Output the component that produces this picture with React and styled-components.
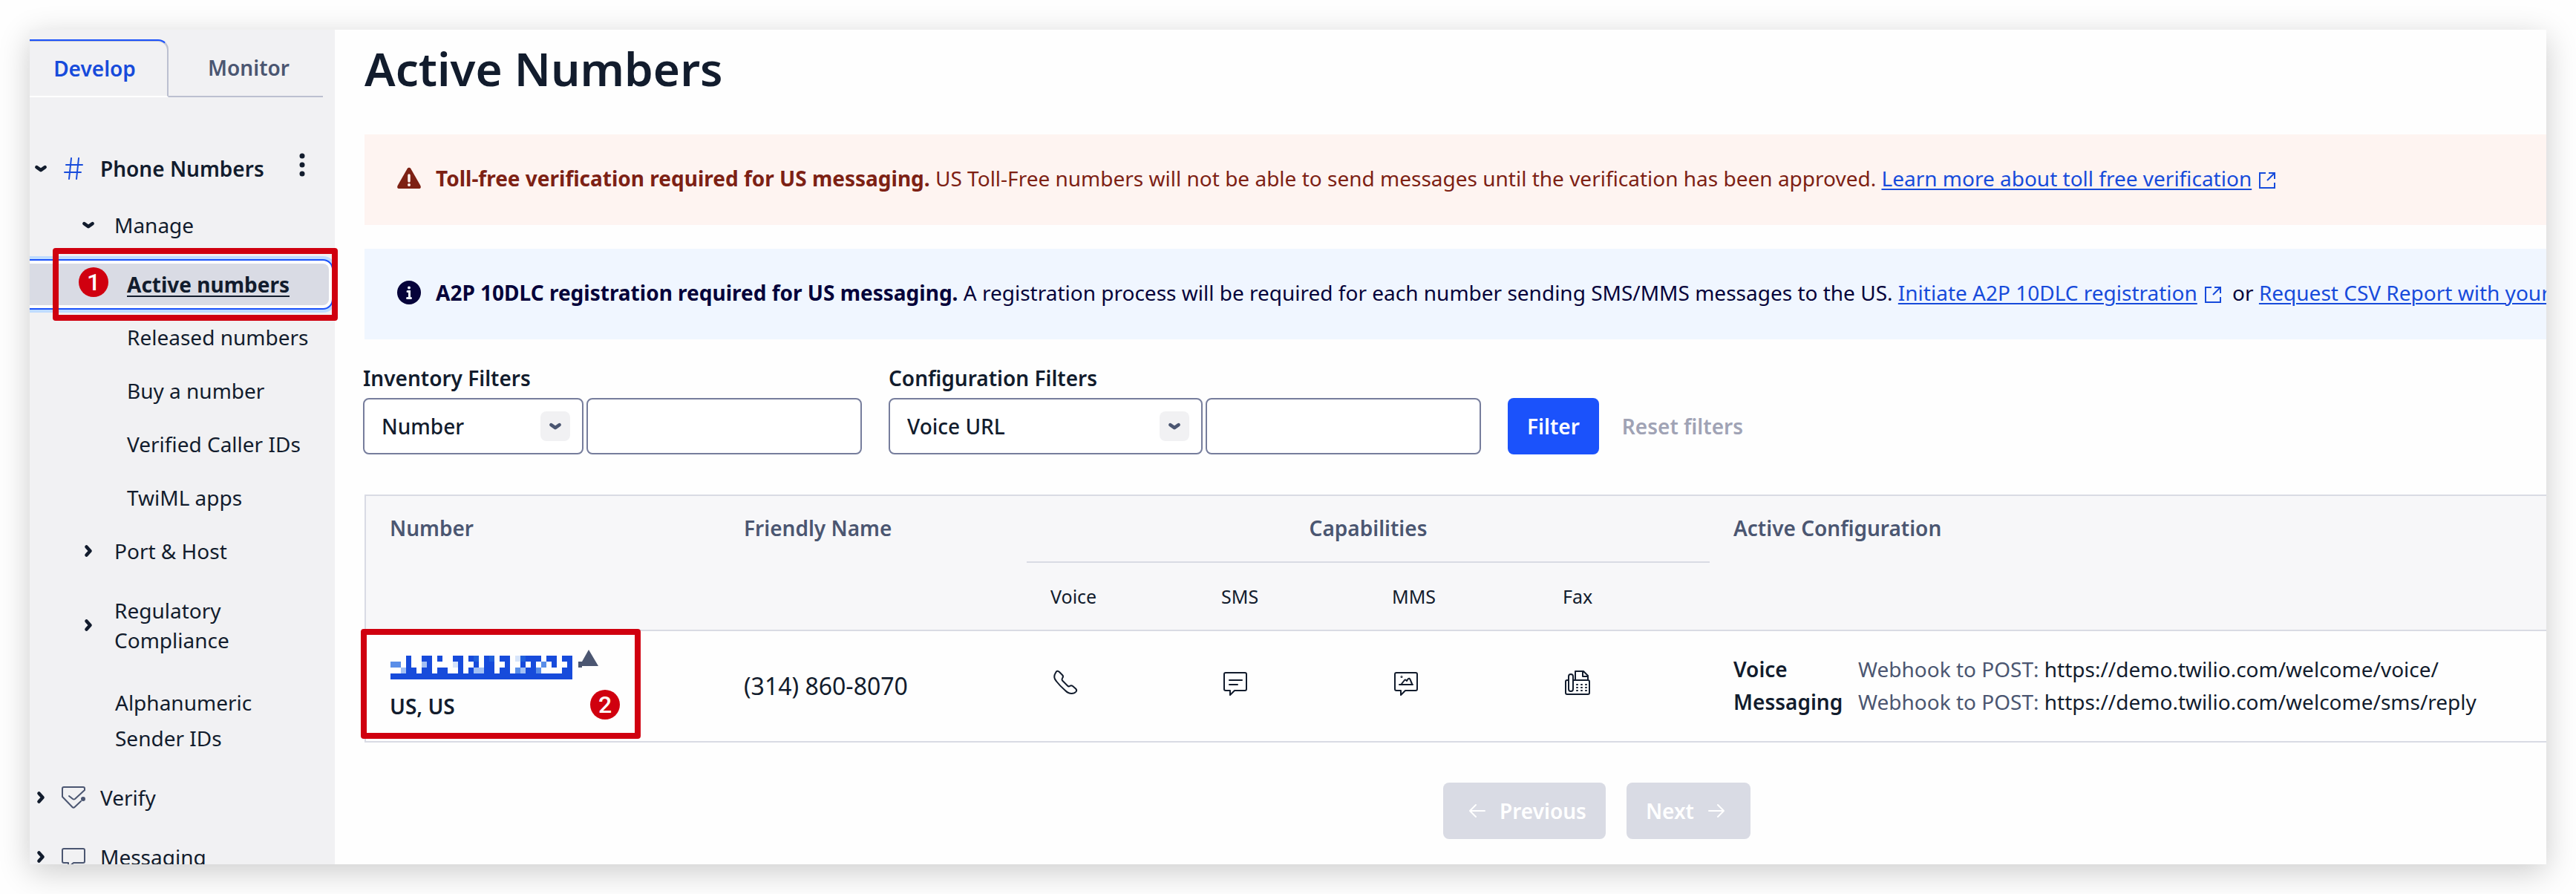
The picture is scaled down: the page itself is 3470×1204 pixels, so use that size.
import React from 'react';
import styled, { createGlobalStyle, css } from 'styled-components';

const GlobalStyle = createGlobalStyle`
  * {
    box-sizing: border-box;
  }
  body {
    margin: 0;
    background: #fefefe;
    color: #121c2d;
    font-family: 'Noto Sans', 'Open Sans', sans-serif;
    font-size: 28px;
    line-height: 48px;
  }
  button, input, select {
    font: inherit;
    color: inherit;
  }
`

const Page = styled.div`
  height: 100vh;
  padding: 40px;
`

const Frame = styled.div`
  display: flex;
  height: 100%;
  overflow: hidden;
  background: #fefefe;
`

const Shadow = styled.div`
  height: 100%;
  box-shadow: 0 10px 40px rgba(0, 0, 0, 0.2);
`

/* ---------- annotations ---------- */

const Highlight = styled.div`
  position: absolute;
  border: 8px solid #d0000f;
  border-radius: 4px;
  pointer-events: none;
  z-index: 2;
`

const NavHighlight = styled(Highlight)`
  top: -21px;
  right: -12px;
  bottom: -21px;
  left: 31px;
`

const CellHighlight = styled(Highlight)`
  top: -3px;
  left: -7px;
  width: 377px;
  height: 148px;
`

const Badge = styled.span`
  position: absolute;
  display: flex;
  align-items: center;
  justify-content: center;
  width: 40px;
  height: 40px;
  border-radius: 50%;
  background: #d0000f;
  color: #fff;
  font-family: Roboto, sans-serif;
  font-size: 32px;
  font-weight: 500;
  line-height: 40px;
`

const NavBadge = styled(Badge)`
  top: 18px;
  left: 27px;
`

const CellBadge = styled(Badge)`
  right: 20px;
  bottom: 18px;
`

/* ---------- sidebar ---------- */

const Sidebar = styled.aside`
  position: relative;
  z-index: 1;
  flex: none;
  width: 411px;
  background: #f1f1f3;
`

const Tabs = styled.div`
  display: flex;
  padding: 13px 16px 56px 0;
`

const Tab = styled.button`
  flex: 1;
  height: 78px;
  padding: 0 0 0 8px;
  border: 0;
  border-bottom: 2px solid #bcc0d0;
  background: none;
  color: #4b5671;
  font-weight: 600;
  ${props => props.$active && css`
    flex: none;
    width: 187px;
    padding: 0 10px 0 0;
    border-top: 2px solid #1b52fb;
    border-right: 2px solid #bcc0d0;
    border-bottom-color: #fff;
    border-top-right-radius: 14px;
    box-shadow: inset 0 1px 0 #bcc0d0;
    color: #174bdb;
  `}
`

const NavRow = styled.div`
  display: flex;
  align-items: center;
  min-height: ${props => props.$height || 72}px;
  padding-left: ${props => props.$indent || 0}px;
  font-weight: ${props => props.$bold ? 600 : 400};
`

const NavToggle = styled.button`
  display: flex;
  flex: none;
  align-items: center;
  justify-content: center;
  width: 20px;
  height: 24px;
  padding: 0;
  border: 0;
  background: none;
`

const NavIcon = styled.span`
  display: flex;
  flex: none;
  justify-content: center;
  width: 32px;
  margin: 0 20px 0 18px;
`

const NavLink = styled.a`
  color: inherit;
  text-decoration: none;
`

const GroupLink = styled(NavLink)`
  width: 170px;
  margin-left: 25px;
  white-space: ${props => props.$wrap ? 'normal' : 'nowrap'};
  line-height: 40px;
`

const PlainLink = styled(NavLink)`
  width: 240px;
  padding: 16px 0;
`

const MenuButton = styled.button`
  display: flex;
  margin: 0 40px 10px auto;
  padding: 0;
  border: 0;
  background: none;
`

const ActiveRow = styled(NavRow)`
  position: relative;
  min-height: 56px;
  margin: 16px 8px 7px 0;
  border-radius: 0 8px 8px 0;
  background: #d9dbe4;
  box-shadow: 0 0 0 4px #fff, 0 0 0 6px #1b52fb, 0 0 0 10px #bfdcff;
  font-weight: 700;
  a {
    text-decoration: underline;
    text-decoration-thickness: 2px;
    text-underline-offset: 4px;
    text-decoration-skip-ink: none;
  }
`

/* ---------- main ---------- */

const Main = styled.main`
  flex: 1;
  min-width: 0;
  padding: 12px 0 0 40px;
`

const Content = styled.div`
  width: calc(100% + 381px);
`

const Title = styled.h1`
  margin: 0 0 49px;
  font-size: 62px;
  font-weight: 600;
  line-height: 80px;
`

const Alert = styled.div`
  display: flex;
  align-items: center;
  gap: 20px;
  margin-bottom: ${props => props.$info ? 28 : 32}px;
  padding: 35px 44px 39px;
  background: ${props => props.$info ? '#f0f6ff' : '#fef4f1'};
  color: ${props => props.$info ? '#06033a' : '#7d2114'};
  white-space: nowrap;
  svg {
    flex: none;
  }
`

const Link = styled.a`
  color: #174bdb;
  text-decoration-thickness: 2px;
  text-underline-offset: 3px;
`

const Filters = styled.form`
  display: flex;
  align-items: flex-end;
  gap: 36px;
  margin: 0 0 54px -2px;
`

const Field = styled.div`
  display: grid;
  grid-template-columns: ${props => props.$select}px 371px;
  gap: 3px 4px;
  label {
    grid-column: 1 / -1;
    font-weight: 600;
  }
`

const SelectWrap = styled.div`
  position: relative;
`

const Select = styled.select`
  appearance: none;
  width: 100%;
  height: 76px;
  padding: 0 60px 0 23px;
  border: 2px solid #767d9c;
  border-radius: 8px;
  background: #fff;
  font-weight: 500;
`

const SelectArrow = styled.span`
  position: absolute;
  top: 18px;
  right: 18px;
  display: flex;
  align-items: center;
  justify-content: center;
  width: 40px;
  height: 40px;
  border-radius: 8px;
  background: #f1f1f3;
  color: #4b5671;
  pointer-events: none;
`

const TextInput = styled.input`
  width: 100%;
  height: 76px;
  padding: 0 24px;
  border: 2px solid #767d9c;
  border-radius: 8px;
  background: #fff;
`

const Button = styled.button`
  display: flex;
  align-items: center;
  gap: 10px;
  height: 76px;
  padding: 0 26px;
  border: 0;
  border-radius: 8px;
  background: ${props => props.$primary ? '#1b52fb' : '#d9dbe4'};
  color: #fff;
  font-weight: 600;
  svg {
    margin: 0 9px;
  }
`

const TextButton = styled(Button)`
  margin-left: -5px;
  padding: 0;
  background: none;
  color: #a0a3b5;
`

const Table = styled.table`
  table-layout: fixed;
  width: 100%;
  border: 2px solid #d9dbe4;
  border-bottom: 0;
  border-spacing: 0;
`

const HeadCell = styled.th`
  height: 90px;
  padding: 19px 32px 0;
  background: #f7f7f9;
  color: #4b5671;
  font-weight: 600;
  text-align: ${props => props.colSpan ? 'center' : 'left'};
  vertical-align: top;
  border-bottom: 2px solid #d9dbe4;
`

const SubHeadCell = styled.th`
  height: 92px;
  padding: 0 32px;
  background: #f7f7f9;
  border-bottom: 2px solid #d9dbe4;
  font-size: 25px;
  font-weight: 400;
  text-align: left;
`

const Cell = styled.td`
  position: relative;
  height: 150px;
  padding: 0 32px;
  border-bottom: 2px solid #d9dbe4;
  line-height: 44px;
  white-space: nowrap;
  svg {
    display: block;
  }
`

const PhoneCell = styled(Cell)`
  font-size: 32px;
`

const IconCell = styled(Cell)`
  padding-bottom: 8px;
`

const NumberLink = styled.a`
  display: block;
  height: 42px;
  margin-bottom: 12px;
`

const Place = styled.div`
  font-weight: 600;
`

const ConfigList = styled.dl`
  display: grid;
  grid-template-columns: 168px 1fr;
  margin: 0;
  padding-bottom: 2px;
  dt {
    font-weight: 600;
  }
  dd {
    margin: 0;
  }
`

const Muted = styled.span`
  color: #4b5671;
`

const Pagination = styled.nav`
  display: flex;
  justify-content: center;
  gap: 28px;
  margin-top: 54px;
`

/* ---------- icons ---------- */

const Chevron = ({ right }) => (
  <svg width="20" height="20" viewBox="0 0 20 20" fill="none" stroke="currentColor" strokeWidth="4.6" strokeLinecap="round" strokeLinejoin="round">
    <path d={right ? 'M7.5 4.5l5 5.5-5 5.5' : 'M4.4 8.2l5.6 4 5.6-4'} />
  </svg>
)

const HashIcon = () => (
  <svg width="26" height="32" viewBox="0 0 26 32" fill="none" stroke="#174bdb" strokeWidth="2" strokeLinecap="round">
    <path d="M10 2L7 30M20 2l-3 28M3 11h22M1 21h22" />
  </svg>
)

const DotsIcon = () => (
  <svg width="8" height="32" viewBox="0 0 8 32" fill="#121c2d">
    <circle cx="4" cy="4" r="3.5" />
    <circle cx="4" cy="16" r="3.5" />
    <circle cx="4" cy="28" r="3.5" />
  </svg>
)

const VerifyIcon = () => (
  <svg width="32" height="32" viewBox="0 0 32 32" fill="none" stroke="#4b5671" strokeWidth="2" strokeLinecap="round" strokeLinejoin="round">
    <path d="M10 14l5 4q1.500 1 3 0L31 6V4q0-2-2-2H3Q1 2 1 4v11l13.500 14q1.500 1.500 3 0L26 21" />
    <circle cx="29" cy="18" r="2" fill="#4b5671" />
  </svg>
)

const MessagingIcon = () => (
  <svg width="32" height="32" viewBox="0 0 32 32" fill="none" stroke="#4b5671" strokeWidth="2" strokeLinejoin="round">
    <path d="M3 5h26q2 0 2 2v15q0 2-2 2H16l-7 6v-6H3q-2 0-2-2V7q0-2 2-2z" />
  </svg>
)

const WarningIcon = () => (
  <svg width="32" height="32" viewBox="0 0 32 32" fill="#7d2114">
    <path d="M13.6 3.2a2.8 2.8 0 0 1 4.800 0l13 22.800q1.500 4-2.400 4H3q-3.900 0-2.400-4z" />
    <path d="M16 12v8" stroke="#fef4f1" strokeWidth="3.5" strokeLinecap="round" />
    <circle cx="16" cy="25" r="2" fill="#fef4f1" />
  </svg>
)

const InfoIcon = () => (
  <svg width="32" height="32" viewBox="0 0 32 32" fill="#06033a">
    <circle cx="16" cy="16" r="16" />
    <circle cx="16" cy="9.5" r="2" fill="#f0f6ff" />
    <path d="M14 14.5h2.500V23M13.500 23.500h5" fill="none" stroke="#f0f6ff" strokeWidth="3" strokeLinecap="round" />
  </svg>
)

const ExternalSvg = styled.svg`
  margin: 0 8px -3px 10px;
`

const ExternalIcon = () => (
  <ExternalSvg width="22" height="22" viewBox="0 0 22 22" fill="none" stroke="#174bdb" strokeWidth="2">
    <path d="M9 1H1v20h20v-7M13 1h8v8M21 1L11 11" />
  </ExternalSvg>
)

const ArrowIcon = ({ right }) => (
  <svg width="22" height="20" viewBox="0 0 22 20" fill="none" stroke="#fff" strokeWidth="2" strokeLinecap="round" strokeLinejoin="round">
    <path d={right ? 'M1 10h20M13 2l8 8-8 8' : 'M21 10H1M9 2l-8 8 8 8'} />
  </svg>
)

const CapabilityIcon = ({ children }) => (
  <svg width="40" height="40" viewBox="0 0 40 40" fill="none" stroke="#121c2d" strokeWidth="2" strokeLinecap="round" strokeLinejoin="round">
    {children}
  </svg>
)

const VoiceIcon = () => (
  <CapabilityIcon>
    <path d="M7 6Q9 2 12 5l4 4q2 2 0 4.500-1 1.500 0 3l7 7q1.500 1.500 3 .5 2-1.500 4 0l4 3.500q2 2 .5 4-2 2.500-6 2.500-4.500 0-8.500-4Q13 24 8 17.500 3 12 7 6z" />
  </CapabilityIcon>
)

const bubble = 'M6 6h26q2 0 2 2v20q0 2-2 2H18l-6 6v-6H6q-2 0-2-2V8q0-2 2-2z'

const SmsIcon = () => (
  <CapabilityIcon>
    <path d={bubble} />
    <path d="M11 16h17M11 22h11" />
  </CapabilityIcon>
)

const MmsIcon = () => (
  <CapabilityIcon>
    <path d={bubble} />
    <path d="M10 22h18M13 21l4-5q1-1 2 0l1 1 2-3q1.500-1 2.500 1l2.500 6" />
    <circle cx="13" cy="11.5" r=".5" />
  </CapabilityIcon>
)

const FaxIcon = () => (
  <CapabilityIcon>
    <path d="M7 16H6q-2 0-2 2v15q0 2 2 2h28q2 0 2-2V18q0-2-2-2H15" />
    <path d="M8 11q0-3 3-3t3 3v17q0 3-3 3t-3-3zM17 15V4h11l6 6v6M27 4v7h6" />
    <path d="M19 22h1M25 22h1M31 22h1M19 26h1M25 26h1M31 26h1M19 30h1M25 30h1M31 30h1" />
  </CapabilityIcon>
)

// a letter is a shade, a dot is an empty block
const shades = { a: '#174bdb', b: '#205fdc', c: '#5a8ee8', d: '#a3c0f3', e: '#d6e4fa' }
const blocks = [
  '...a..aa.a..aa.ab.ab.aa.ebaaa.aa.aa',
  'cc.a..da....ea..a.aa..a..a.a.c.a..a',
  '..daa.aa.aa..a.addaa.aa.cdaac....aa',
  'aaaaaaaaaaaaaaaaaaaaaaaaaaaaaaaaaaa',
]

const MaskedNumber = () => (
  <svg width="282" height="42" viewBox="0 0 282 42" shapeRendering="crispEdges">
    {blocks.map((row, y) => row.split('').map((shade, x) => (
      shade !== '.' && <rect key={`${x}-${y}`} x={1 + x * 7} y={8 + y * 8} width="7" height="8" fill={shades[shade]} />
    )))}
    <path d="M268 0l13 22h-22v2h-5v-8h5z" fill="#4b5671" shapeRendering="auto" />
  </svg>
)

/* ---------- parts ---------- */

const subPages = ['Released numbers', 'Buy a number', 'Verified Caller IDs', 'TwiML apps']

const Product = ({ icon, open, bold, children, menu }) => (
  <NavRow $height={80} $indent={5} $bold={bold}>
    <NavToggle aria-label="Toggle"><Chevron right={!open} /></NavToggle>
    <NavIcon>{icon}</NavIcon>
    <NavLink href="#">{children}</NavLink>
    {menu && <MenuButton aria-label="Options"><DotsIcon /></MenuButton>}
  </NavRow>
)

const Group = ({ open, height, wrap, children }) => (
  <NavRow $height={height} $indent={69}>
    <NavToggle aria-label="Toggle"><Chevron right={!open} /></NavToggle>
    <GroupLink href="#" $wrap={wrap}>{children}</GroupLink>
  </NavRow>
)

const FilterField = ({ id, label, option, width }) => (
  <Field $select={width}>
    <label htmlFor={id}>{label}</label>
    <SelectWrap>
      <Select id={id}>
        <option>{option}</option>
      </Select>
      <SelectArrow><Chevron /></SelectArrow>
    </SelectWrap>
    <TextInput type="text" aria-label={`${label} value`} />
  </Field>
)

const SideNav = () => (
  <Sidebar>
    <Tabs role="tablist">
      <Tab role="tab" aria-selected="true" $active>Develop</Tab>
      <Tab role="tab" aria-selected="false">Monitor</Tab>
    </Tabs>
    <nav>
      <Product icon={<HashIcon />} open bold menu>Phone Numbers</Product>
      <Group open>Manage</Group>
      <ActiveRow $indent={131}>
        <NavLink href="#" aria-current="page">Active numbers</NavLink>
        <NavHighlight>
          <NavBadge>1</NavBadge>
        </NavHighlight>
      </ActiveRow>
      {subPages.map(page => (
        <NavRow key={page} $indent={131}><NavLink href="#">{page}</NavLink></NavRow>
      ))}
      <Group>Port &amp; Host</Group>
      <Group height={128} wrap>Regulatory Compliance</Group>
      <NavRow $indent={115}><PlainLink href="#">Alphanumeric Sender IDs</PlainLink></NavRow>
      <Product icon={<VerifyIcon />}>Verify</Product>
      <Product icon={<MessagingIcon />}>Messaging</Product>
    </nav>
  </Sidebar>
)

const NumbersTable = () => (
  <Table>
    <colgroup>
      <col width="477" />
      <col width="413" />
      <col width="230" span="4" />
      <col />
    </colgroup>
    <thead>
      <tr>
        <HeadCell rowSpan={2}>Number</HeadCell>
        <HeadCell rowSpan={2}>Friendly Name</HeadCell>
        <HeadCell colSpan={4}>Capabilities</HeadCell>
        <HeadCell rowSpan={2}>Active Configuration</HeadCell>
      </tr>
      <tr>
        <SubHeadCell>Voice</SubHeadCell>
        <SubHeadCell>SMS</SubHeadCell>
        <SubHeadCell>MMS</SubHeadCell>
        <SubHeadCell>Fax</SubHeadCell>
      </tr>
    </thead>
    <tbody>
      <tr>
        <Cell>
          <NumberLink href="#" aria-label="Phone number"><MaskedNumber /></NumberLink>
          <Place>US, US</Place>
          <CellHighlight>
            <CellBadge>2</CellBadge>
          </CellHighlight>
        </Cell>
        <PhoneCell>(314) 860-8070</PhoneCell>
        <IconCell><VoiceIcon /></IconCell>
        <IconCell><SmsIcon /></IconCell>
        <IconCell><MmsIcon /></IconCell>
        <IconCell><FaxIcon /></IconCell>
        <Cell>
          <ConfigList>
            <dt>Voice</dt>
            <dd><Muted>Webhook to POST:</Muted> https://demo.twilio.com/welcome/voice/</dd>
            <dt>Messaging</dt>
            <dd><Muted>Webhook to POST:</Muted> https://demo.twilio.com/welcome/sms/reply</dd>
          </ConfigList>
        </Cell>
      </tr>
    </tbody>
  </Table>
)

const App = () => (
  <Page>
    <GlobalStyle />
    <Shadow>
      <Frame>
        <SideNav />
        <Main>
          <Content>
            <Title>Active Numbers</Title>
            <Alert role="alert">
              <WarningIcon />
              <div>
                <strong>Toll-free verification required for US messaging.</strong>
                {' '}US Toll-Free numbers will not be able to send messages until the verification has been approved.{' '}
                <Link href="#">Learn more about toll free verification</Link>
                <ExternalIcon />
              </div>
            </Alert>
            <Alert role="status" $info>
              <InfoIcon />
              <div>
                <strong>A2P 10DLC registration required for US messaging.</strong>
                {' '}A registration process will be required for each number sending SMS/MMS messages to the US.{' '}
                <Link href="#">Initiate A2P 10DLC registration</Link>
                <ExternalIcon />
                {' '}or <Link href="#">Request CSV Report with your</Link>
              </div>
            </Alert>
            <Filters>
              <FilterField id="inventory" label="Inventory Filters" option="Number" width={297} />
              <FilterField id="configuration" label="Configuration Filters" option="Voice URL" width={423} />
              <Button type="button" $primary>Filter</Button>
              <TextButton type="button">Reset filters</TextButton>
            </Filters>
            <NumbersTable />
            <Pagination>
              <Button disabled><ArrowIcon />Previous</Button>
              <Button disabled>Next<ArrowIcon right /></Button>
            </Pagination>
          </Content>
        </Main>
      </Frame>
    </Shadow>
  </Page>
)

export default App
